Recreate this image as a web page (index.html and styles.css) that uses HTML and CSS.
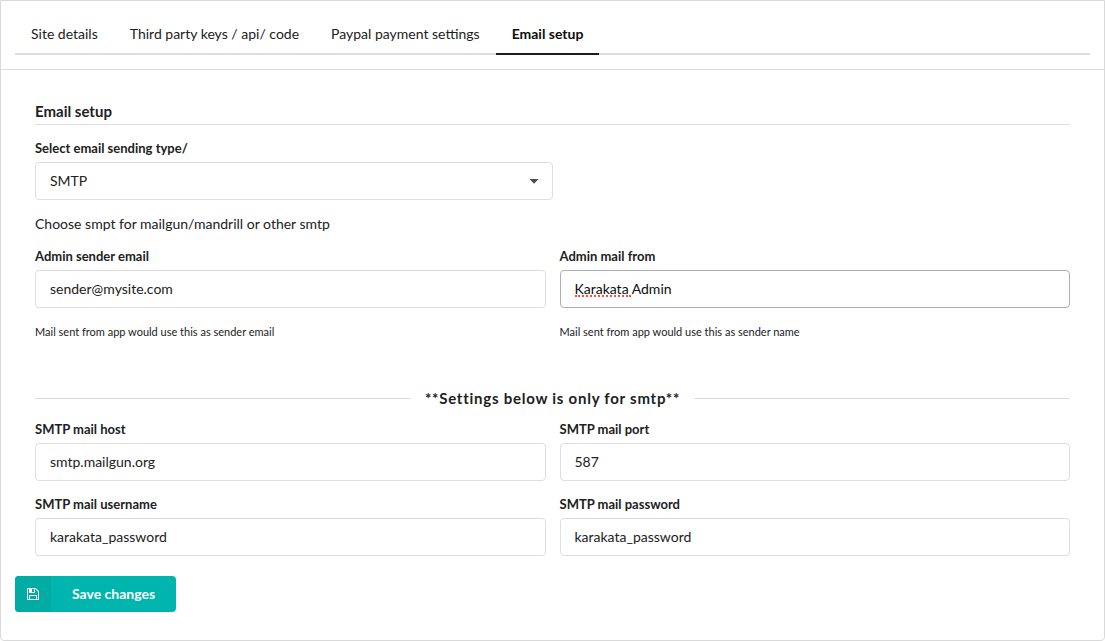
FILE: index.html
```html
<!DOCTYPE html>
<html lang="en">
<head>
<meta charset="utf-8">
<title>Email setup</title>
<link rel="stylesheet" href="styles.css">
</head>
<body>
<main class="panel">
  <header class="panel-header">
    <nav class="tabs">
      <a class="tab" href="#site">Site details</a>
      <a class="tab" href="#keys">Third party keys / api/ code</a>
      <a class="tab" href="#paypal">Paypal payment settings</a>
      <a class="tab active" href="#email" aria-current="page">Email setup</a>
    </nav>
  </header>
  <form class="form">
    <div class="form-body">
      <h4 class="heading">Email setup</h4>
      <div class="field half">
        <label for="type">Select email sending type/</label>
        <div class="select-wrap">
          <select class="control" id="type"><option>SMTP</option></select>
          <svg class="caret" viewBox="0 0 10 5" aria-hidden="true"><path d="M0.5 0H9.5L5 4.8Z"/></svg>
        </div>
      </div>
      <p class="note">Choose smpt for mailgun/mandrill or other smtp</p>
      <div class="fields">
        <div class="field">
          <label for="sender">Admin sender email</label>
          <input class="control" id="sender" type="text" value="sender@mysite.com">
          <small class="help">Mail sent from app would use this as sender email</small>
        </div>
        <div class="field">
          <label for="from">Admin mail from</label>
          <div class="spell-wrap">
            <input class="control selected" id="from" type="text" value="Karakata Admin">
            <span class="spell-mark" aria-hidden="true"></span>
          </div>
          <small class="help">Mail sent from app would use this as sender name</small>
        </div>
      </div>
      <div class="divider"><span class="divider-text">**Settings below is only for smtp**</span></div>
      <div class="fields">
        <div class="field">
          <label for="host">SMTP mail host</label>
          <input class="control" id="host" type="text" value="smtp.mailgun.org">
        </div>
        <div class="field">
          <label for="port">SMTP mail port</label>
          <input class="control" id="port" type="text" value="587">
        </div>
        <div class="field">
          <label for="user">SMTP mail username</label>
          <input class="control" id="user" type="text" value="karakata_password">
        </div>
        <div class="field">
          <label for="pass">SMTP mail password</label>
          <input class="control" id="pass" type="text" value="karakata_password">
        </div>
      </div>
    </div>
    <button class="save" type="submit">
      <span class="save-icon">
        <svg width="12" height="12" viewBox="0 0 1536 1536" fill="currentColor" aria-hidden="true"><path fill-rule="evenodd" transform="translate(0 1408) scale(1 -1)" d="M384 0h768v384h-768v-384zM1280 0h128v896q0 14 -10 38.500t-20 34.500l-281 281q-10 10 -34 20t-39 10v-416q0 -40 -28 -68t-68 -28h-576q-40 0 -68 28t-28 68v416h-128v-1280h128v416q0 40 28 68t68 28h832q40 0 68 -28t28 -68v-416zM896 928v320q0 13 -9.500 22.500t-22.500 9.500h-192q-13 0 -22.500 -9.500t-9.500 -22.500v-320q0 -13 9.500 -22.500t22.500 -9.500h192q13 0 22.500 9.500t9.500 22.500zM1536 896v-928q0 -40 -28 -68t-68 -28h-1344q-40 0 -68 28t-28 68v1344q0 40 28 68t68 28h928q40 0 88 -20t76 -48l280 -280q28 -28 48 -76t20 -88z"/></svg>
      </span>
      <span class="save-text">Save changes</span>
    </button>
  </form>
</main>
</body>
</html>
```
FILE: styles.css
```css
* {
  box-sizing: border-box;
}

body {
  margin: 0;
  background: #fff;
  color: #212121;
  font: 14px/20px Lato, sans-serif;
}

.panel {
  border: 1px solid #d9d9d9;
  border-radius: 0 0 4px 4px;
}

.panel-header {
  padding: 14px;
  border-bottom: 1px solid #dededf;
}

.tabs {
  display: flex;
  border-bottom: 2px solid #dededf;
}

.tab {
  margin-bottom: -2px;
  padding: 9px 16px;
  border-bottom: 2px solid transparent;
  color: #212121;
  text-decoration: none;
}

.tab.active {
  border-color: #1b1c1d;
  color: #0d0d0d;
  font-weight: 700;
}

.form {
  padding: 32px 14px 28px;
}

.form-body {
  padding: 0 20px;
}

.heading {
  margin: 0 0 14px;
  padding-bottom: 4px;
  border-bottom: 1px solid #dededf;
  font-size: 15px;
  line-height: 18px;
}

.fields {
  display: grid;
  grid-template-columns: 1fr 1fr;
  gap: 14px;
}

.half {
  width: 50%;
}

.field label {
  display: block;
  margin-bottom: 5px;
  font-size: 13px;
  font-weight: 700;
  line-height: 18px;
}

.control {
  display: block;
  width: 100%;
  height: 38px;
  padding: 0 14px 1px;
  border: 1px solid #dededf;
  border-radius: 4px;
  outline: none;
  appearance: none;
  background: #fff;
  color: #212121;
  font: inherit;
}

.control.selected {
  border-color: #adb0b3;
  color: #0d0d0d;
}

.select-wrap,
.spell-wrap {
  position: relative;
}

.caret {
  position: absolute;
  top: 17px;
  right: 14px;
  width: 10px;
  height: 5px;
  fill: #4d4d4d;
}

.spell-mark {
  position: absolute;
  top: 25px;
  left: 15px;
  width: 56px;
  border-bottom: 2px dotted #ff4a35;
}

.note {
  margin: 14px 0 13px;
}

.help {
  display: block;
  margin-top: 14px;
  font-size: 11px;
}

.divider {
  display: flex;
  align-items: center;
  gap: 14px;
  margin: 46px 0 12px;
}

.divider::before,
.divider::after {
  flex: 1;
  height: 1px;
  background: #dededf;
  content: "";
}

.divider-text {
  font-size: 15px;
  font-weight: 700;
  letter-spacing: 0.05em;
}

.save {
  display: flex;
  height: 36px;
  margin-top: 20px;
  padding: 0;
  overflow: hidden;
  border: 0;
  border-radius: 4px;
  background: #00b5ad;
  color: #fff;
  font: 700 14px/36px Lato, sans-serif;
}

.save-icon {
  display: flex;
  align-items: center;
  justify-content: center;
  width: 36px;
  background: #00aca4;
}

.save-text {
  padding: 0 21px;
}
```
